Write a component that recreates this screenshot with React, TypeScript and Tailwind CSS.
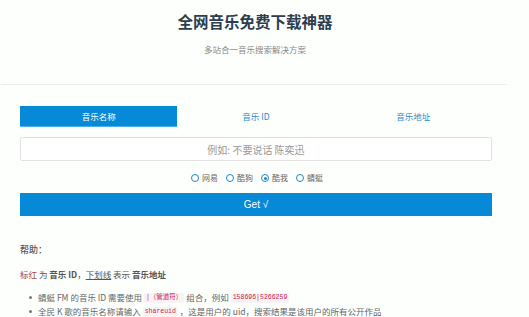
export default function App() {
  const font = { fontFamily: '"Noto Sans CJK SC", "Noto Sans", "Liberation Sans", sans-serif' };
  const mono = { fontFamily: '"Liberation Mono", "Noto Sans CJK SC", monospace' };
  const radios = [
    { label: "网易", checked: false },
    { label: "酷狗", checked: false },
    { label: "酷我", checked: true },
    { label: "蜻蜓", checked: false },
  ];
  return (
    <div className="w-[529px] h-[317px] overflow-hidden bg-[#fdfffd]" style={font}>
      <div className="w-[506px] ml-[1px] h-[85px] border-b border-[#eeeeee] flex flex-col items-center">
        <h1 className="mt-[10px] h-[22px] leading-[22px] text-[15.5px] font-bold text-[#2c3e50] pl-[2px]">全网音乐免费下载神器</h1>
        <p className="mt-[10px] h-[14px] leading-[14px] text-[8.5px] text-[#888888] pl-[2px]">多站合一音乐搜索解决方案</p>
      </div>
      <div className="w-[512px] px-[20px] pt-[21px]">
        <div className="grid grid-cols-3 h-[21px]">
          <div className="bg-[#0689d6] text-white text-[8.5px] flex items-center justify-center border-b border-[#4fb0ea]">音乐名称</div>
          <div className="text-[#2a8ccc] text-[8.5px] flex items-center justify-center">音乐 ID</div>
          <div className="text-[#2a8ccc] text-[8.5px] flex items-center justify-center">音乐地址</div>
        </div>
        <div className="mt-[10px] h-[24px] border border-[#e2e2e2] rounded-[2px] bg-white flex items-center justify-center text-[10px] text-[#999999]">
          例如: 不要说话 陈奕迅
        </div>
        <div className="mt-[11px] h-[12px] flex items-center justify-center gap-[8px] pl-[2px]">
          {radios.map((r) => (
            <div key={r.label} className="flex items-center gap-[3px]">
              <span className="w-[8px] h-[8px] rounded-full border-[1.5px] border-[#1a88cc] flex items-center justify-center">
                {r.checked && <span className="w-[3px] h-[3px] rounded-full bg-[#1a88cc]" />}
              </span>
              <span className="text-[8px] text-[#666666] leading-none">{r.label}</span>
            </div>
          ))}
        </div>
        <div className="mt-[9px] h-[23px] bg-[#0689d6] text-white text-[10px] flex items-center justify-center" style={{ fontFamily: '"Liberation Sans", "DejaVu Sans", sans-serif' }}>Get √</div>
        <div className="mt-[27px] h-[14px] flex items-center text-[9px] text-[#555555] font-medium">帮助：</div>
        <div className="mt-[10px] h-[14px] flex items-center text-[8.5px] text-[#555555] whitespace-nowrap">
          <span className="text-[#a94442]">标红</span>
          <span>&nbsp;为&nbsp;</span>
          <span className="font-bold">音乐 ID</span>
          <span>，</span>
          <span className="underline">下划线</span>
          <span>&nbsp;表示&nbsp;</span>
          <span className="font-bold">音乐地址</span>
        </div>
        <ul className="mt-[9px] pl-[9px] text-[8.5px] text-[#666666] whitespace-nowrap">
          <li className="h-[14px] flex items-center">
            <span className="w-[3px] h-[3px] rounded-full bg-[#777777] mr-[6px]" />
            <span>蜻蜓 FM 的音乐 ID 需要使用&nbsp;</span>
            <code className="bg-[#f9f2f4] text-[#c7254e] text-[6.5px] leading-[10px] h-[10px] mt-[2px] flex items-center px-[2px] rounded-[2px]" style={mono}>|（管道符）</code>
            <span>&nbsp;组合，例如&nbsp;</span>
            <code className="bg-[#f9f2f4] text-[#c7254e] text-[6.5px] leading-[10px] h-[10px] mt-[2px] flex items-center px-[2px] rounded-[2px]" style={mono}>158696|5266259</code>
          </li>
          <li className="h-[14px] flex items-center">
            <span className="w-[3px] h-[3px] rounded-full bg-[#777777] mr-[6px]" />
            <span>全民 K 歌的音乐名称请输入&nbsp;</span>
            <code className="bg-[#f9f2f4] text-[#c7254e] text-[6.5px] leading-[10px] h-[10px] mt-[2px] flex items-center px-[2px] rounded-[2px]" style={mono}>shareuid</code>
            <span>&nbsp;，这是用户的 uid，搜索结果是该用户的所有公开作品</span>
          </li>
        </ul>
      </div>
    </div>
  );
}
